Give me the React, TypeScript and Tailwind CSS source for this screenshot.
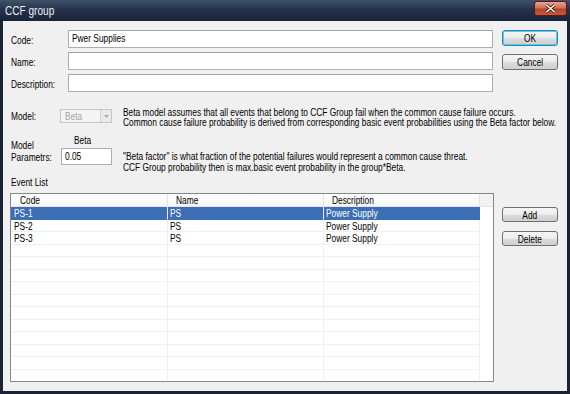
import React from 'react';

// the dialog font is a tall, narrow 8pt sans; Liberation Sans squeezed horizontally
function T({ children, className = '', center = false }: { children: React.ReactNode; className?: string; center?: boolean }) {
  return (
    <span className={`inline-block whitespace-nowrap scale-x-[0.76] ${center ? 'origin-center' : 'origin-left'} ${className}`}>
      {children}
    </span>
  );
}

function Btn({ label, primary = false, h = 'h-[16px]' }: { label: string; primary?: boolean; h?: string }) {
  return (
    <div
      className={`${h} w-[56px] shrink-0 flex items-center justify-center rounded-[3px] border text-[11px] leading-[12px] text-black bg-[linear-gradient(to_bottom,#f6f6f6_0%,#ebebeb_50%,#dddddd_51%,#cfcfcf_100%)] ${
        primary ? 'border-[#3c7fb1] shadow-[inset_0_0_0_1px_#48d0f4]' : 'border-[#707070]'
      }`}
    >
      <T center>{label}</T>
    </div>
  );
}

function Field({ label, value = '' }: { label: string; value?: string }) {
  return (
    <div className="flex items-center h-[18px]">
      <div className="w-[57px] shrink-0 text-[11px] leading-[12px] pt-[2px]">
        <T>{label}</T>
      </div>
      <div className="flex-1 h-[18px] bg-white border border-[#abadb3] border-t-[#a0a3aa] px-[3px] text-[11px] leading-[14px]">
        <T>{value}</T>
      </div>
    </div>
  );
}

const rows = [
  ['PS-1', 'PS', 'Power Supply'],
  ['PS-2', 'PS', 'Power Supply'],
  ['PS-3', 'PS', 'Power Supply'],
];

export default function App() {
  const filler = Array.from({ length: 11 });
  return (
    <div className="w-[570px] h-[394px] flex flex-col bg-[#1b2434] font-['Liberation_Sans',Arial,sans-serif] text-black">
      {/* title bar */}
      <div className="h-[21px] shrink-0 flex items-start justify-between bg-[linear-gradient(to_bottom,#41526b_0%,#25334a_45%,#18233a_100%)]">
        <div className="pl-[5px] pt-[4px] text-[12px] leading-[14px] text-[#e8edf5]">
          <span className="inline-block origin-left scale-x-[0.84] whitespace-nowrap">CCF group</span>
        </div>
        <div className="mt-[1px] mr-[3px] w-[33px] h-[15px] rounded-[3px] border border-[#5a1a14] bg-[linear-gradient(to_bottom,#e8a493_0%,#d0705c_45%,#b9412c_55%,#c45a3d_100%)] flex items-center justify-center">
          <svg width="11" height="9" viewBox="0 0 11 9">
            <path d="M1.5 1 L9.5 8 M9.5 1 L1.5 8" stroke="#3a1008" strokeWidth="3" />
            <path d="M1.5 1 L9.5 8 M9.5 1 L1.5 8" stroke="#ffffff" strokeWidth="1.6" />
          </svg>
        </div>
      </div>

      {/* client */}
      <div className="flex-1 mx-[3px] mb-[3px] bg-[#f0f0f0] px-[8px] pt-[9px] overflow-hidden">
        <div className="flex gap-[9px]">
          <div className="w-[482px] shrink-0 flex flex-col gap-[4px]">
            <Field label="Code:" value="Pwer Supplies" />
            <Field label="Name:" />
            <Field label="Description:" />
          </div>
          <div className="flex flex-col gap-[8px]">
            <Btn label="OK" primary />
            <Btn label="Cancel" />
          </div>
        </div>

        {/* model */}
        <div className="flex items-start mt-[15px] h-[20px]">
          <div className="w-[49px] shrink-0 mt-[2px] text-[11px] leading-[14px]">
            <T>Model:</T>
          </div>
          <div className="mt-[2px] w-[52px] h-[14px] shrink-0 flex border border-[#c3c6c9] bg-[#f4f4f4]">
            <div className="flex-1 pl-[4px] text-[11px] leading-[12px] text-[#a3a3a3]">
              <T>Beta</T>
            </div>
            <div className="w-[11px] h-full border-l border-[#d3d3d3] bg-[#eaeaea] flex items-center justify-center">
              <svg width="5" height="3" viewBox="0 0 5 3">
                <path d="M0 0 L5 0 L2.5 3 Z" fill="#a8a8a8" />
              </svg>
            </div>
          </div>
          <div className="ml-[11px] shrink-0 text-[11px] leading-[10px] flex flex-col">
            <T>Beta model assumes that all events that belong to CCF Group fail when the common cause failure occurs.</T>
            <T>Common cause failure probability is derived from corresponding basic event probabilities using the Beta factor below.</T>
          </div>
        </div>

        {/* parameters */}
        <div className="flex items-start mt-[7px] h-[39px]">
          <div className="w-[50px] shrink-0 mt-[5px] text-[11px] leading-[12px] flex flex-col">
            <T>Model</T>
            <T>Parametrs:</T>
          </div>
          <div className="w-[51px] shrink-0 flex flex-col">
            <div className="pl-[13px] text-[11px] leading-[12px]">
              <T>Beta</T>
            </div>
            <div className="mt-[2px] h-[17px] bg-white border border-[#abadb3] px-[3px] text-[11px] leading-[14px]">
              <T>0.05</T>
            </div>
          </div>
          <div className="ml-[11px] shrink-0 mt-[17px] text-[11px] leading-[11px] flex flex-col">
            <T>"Beta factor" is what fraction of the potential failures would represent a common cause threat.</T>
            <T>CCF Group probability then is max.basic event probability in the group*Beta.</T>
          </div>
        </div>

        <div className="mt-[3px] text-[11px] leading-[12px]">
          <T>Event List</T>
        </div>

        {/* list + buttons */}
        <div className="flex mt-[5px] -ml-[1px]">
          <div className="w-[484px] h-[189px] shrink-0 border border-[#828790] bg-white overflow-hidden text-[11px]">
            <div className="flex h-[13px] border-b border-[#e5e5e5] bg-[linear-gradient(to_bottom,#ffffff,#f5f6f7)] leading-[12px]">
              <div className="w-[157px] shrink-0 pl-[9px] border-r border-[#e2e3e4]"><T>Code</T></div>
              <div className="w-[156px] shrink-0 pl-[8px] border-r border-[#e2e3e4]"><T>Name</T></div>
              <div className="w-[156px] shrink-0 pl-[8px] border-r border-[#e2e3e4]"><T>Description</T></div>
              <div className="flex-1 bg-[#f2f2f2]"></div>
            </div>
            {rows.map((r, i) => {
              const sel = i === 0;
              return (
                <div key={r[0]} className="flex h-[12.5px] leading-[12px]">
                  <div className={`w-[157px] shrink-0 pl-[3px] border-r border-b ${sel ? 'bg-[#3b6eb4] text-white border-r-[#e8eef7] border-b-[#3b6eb4]' : 'border-[#f0f0f0]'}`}><T>{r[0]}</T></div>
                  <div className={`w-[156px] shrink-0 pl-[2px] border-r border-b ${sel ? 'bg-[#3b6eb4] text-white border-r-[#e8eef7] border-b-[#3b6eb4]' : 'border-[#f0f0f0]'}`}><T>{r[1]}</T></div>
                  <div className={`w-[156px] shrink-0 pl-[2px] border-r border-b ${sel ? 'bg-[#3b6eb4] text-white border-r-[#3b6eb4] border-b-[#3b6eb4]' : 'border-[#f0f0f0]'}`}><T>{r[2]}</T></div>
                  <div className="flex-1"></div>
                </div>
              );
            })}
            {filler.map((_, i) => (
              <div key={i} className="flex h-[12.5px]">
                <div className="w-[157px] shrink-0 border-r border-b border-[#f0f0f0]"></div>
                <div className="w-[156px] shrink-0 border-r border-b border-[#f0f0f0]"></div>
                <div className="w-[156px] shrink-0 border-r border-b border-[#f0f0f0]"></div>
                <div className="flex-1"></div>
              </div>
            ))}
          </div>
          <div className="ml-[8px] mt-[14px] flex flex-col gap-[9px]">
            <Btn label="Add" h="h-[15px]" />
            <Btn label="Delete" h="h-[15px]" />
          </div>
        </div>
      </div>
    </div>
  );
}
